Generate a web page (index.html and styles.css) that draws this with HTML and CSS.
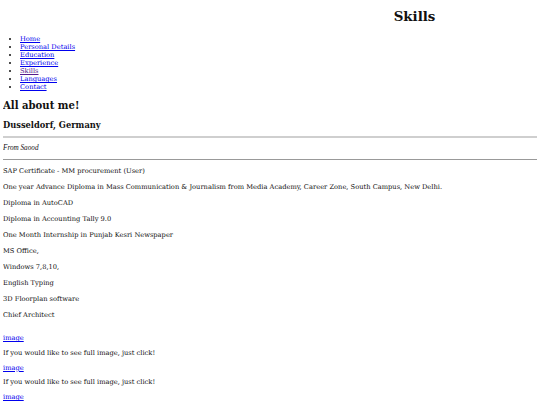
FILE: index.html
```html
<!DOCTYPE html>
<html>
<head>
<meta charset="utf-8">
<title>Skills</title>
<link rel="stylesheet" href="styles.css">
</head>
<body>
<header class="top">
  <h1 class="title">Skills</h1>
  <ul class="nav">
    <li><a href="#">Home</a></li>
    <li><a href="#">Personal Details</a></li>
    <li><a href="#">Education</a></li>
    <li><a href="#">Experience</a></li>
    <li><a class="visited" href="#">Skills</a></li>
    <li><a href="#">Languages</a></li>
    <li><a href="#">Contact</a></li>
  </ul>
</header>
<section class="about">
  <h2 class="about-title">All about me!</h2>
  <h3 class="place">Dusseldorf, Germany</h3>
  <hr class="rule-thick">
  <p class="from">From Saood</p>
  <hr class="rule-thin">
</section>
<section class="skills">
  <p>SAP Certificate - MM procurement (User)</p>
  <p>One year Advance Diploma in Mass Communication &amp; Journalism from Media Academy, Career Zone, South Campus, New Delhi.</p>
  <p>Diploma in AutoCAD</p>
  <p>Diploma in Accounting Tally 9.0</p>
  <p>One Month Internship in Punjab Kesri Newspaper</p>
  <p>MS Office,</p>
  <p>Windows 7,8,10,</p>
  <p>English Typing</p>
  <p>3D Floorplan software</p>
  <p>Chief Architect</p>
</section>
<section class="gallery">
  <div class="shot"><a href="#">image</a><p>If you would like to see full image, just click!</p></div>
  <div class="shot"><a href="#">image</a><p>If you would like to see full image, just click!</p></div>
  <div class="shot"><a href="#">image</a><p>If you would like to see full image, just click!</p></div>
</section>
</body>
</html>
```

FILE: styles.css
```css
html, body {
  background: #fff;
}
body {
  margin: 3px;
  font-family: "DejaVu Serif", serif;
  font-size: 6.7px;
  line-height: 8px;
  color: #111;
}
a {
  color: #0000ee;
}
a.visited {
  color: #551a8b;
}
.title {
  margin: 5px 0 0 289px;
  text-align: center;
  font-size: 13.4px;
  line-height: 17px;
  font-weight: bold;
  color: #111;
}
.nav {
  margin: 10px 0 0;
  padding-left: 17px;
}
.nav li {
  line-height: 8px;
}
.about-title {
  margin: 7.5px 0 0;
  font-size: 10.1px;
  line-height: 14px;
  color: #111;
}
.place {
  margin: 7.3px 0 0;
  font-size: 8.3px;
  line-height: 10px;
  color: #111;
}
.rule-thick {
  margin: 6.5px -3px 0 0;
  border: 0;
  border-top: 2px solid #cfcfcf;
  height: 0;
}
.from {
  margin: 6px 0 0;
  font-family: "Liberation Serif", serif;
  font-style: italic;
  font-size: 7.2px;
  line-height: 8px;
}
.rule-thin {
  margin: 6.3px -3px 0 0;
  border: 0;
  border-top: 1px solid #999;
  height: 0;
}
.skills p {
  margin: 0 0 8px;
}
.skills p:first-child {
  margin-top: 7.5px;
}
.skills p:last-child {
  margin-bottom: 0;
}
.gallery {
  margin-top: 15.3px;
}
.shot a {
  display: block;
  line-height: 8px;
}
.shot p {
  margin: 6.7px 0;
}
```
